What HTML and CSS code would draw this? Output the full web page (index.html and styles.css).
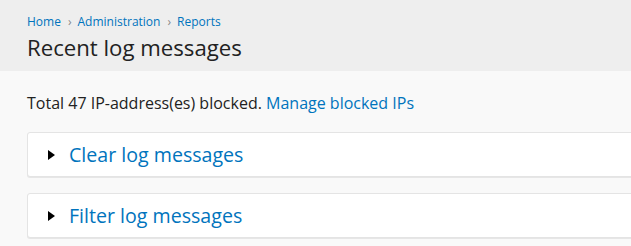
FILE: index.html
```html
<!DOCTYPE html>
<html lang="en">

<head>
	<meta charset="UTF-8">
	<meta name="viewport" content="width=device-width, initial-scale=1.0">
	<title>Recent log messages</title>
	<link rel="stylesheet" href="styles.css">
</head>

<body>
	<!-- 页面头部 -->
	<div class="header">
		<ol class="breadcrumb">
			<li><a href="#">Home</a></li>
			<li><a href="#">Administration</a></li>
			<li><a href="#">Reports</a></li>
		</ol>
		<h1 class="page-title">Recent log messages</h1>
	</div>

	<!-- 内容 -->
	<div class="content">
		<p class="blocked">Total 47 IP-address(es) blocked. <a href="#">Manage blocked IPs</a></p>

		<details class="panel">
			<summary>Clear log messages</summary>
		</details>

		<details class="panel">
			<summary>Filter log messages</summary>
		</details>
	</div>
</body>

</html>
```

FILE: styles.css
```css
* {
	margin: 0;
	padding: 0;
	box-sizing: border-box;
}

body {
	background: #f9f9f9;
	font-family: "Open Sans", "DejaVu Sans", sans-serif;
	color: #222;
	overflow: hidden;
}

a {
	color: #0074bd;
	text-decoration: none;
}

.header {
	height: 71px;
	padding: 14px 27px 0;
	background: #eee;
}

.breadcrumb {
	display: flex;
	font-size: 12px;
	line-height: 16px;
}

.breadcrumb li {
	list-style: none;
}

.breadcrumb li + li::before {
	content: "›";
	margin: 0 6px 0 7px;
	color: #888;
}

.page-title {
	margin-top: 3px;
	font-size: 22.2px;
	font-weight: 400;
	line-height: 30px;
	color: #222;
}

.content {
	padding: 22px 0 0 27px;
}

.blocked {
	font-size: 16px;
	line-height: 20px;
	margin-bottom: 19px;
}

.panel {
	width: 640px;
	height: 45px;
	margin-bottom: 16px;
	background: #fff;
	border: 1px solid #e4e4e4;
	border-radius: 3px;
	box-shadow: 0 1px 0 #e6e6e6;
}

.panel summary {
	display: flex;
	align-items: center;
	height: 43px;
	padding-left: 20px;
	list-style: none;
	font-size: 19.6px;
	color: #0074bd;
	cursor: pointer;
}

.panel summary::-webkit-details-marker {
	display: none;
}

/* 小三角 */
.panel summary::before {
	content: "";
	width: 0;
	height: 0;
	margin-right: 14px;
	border-style: solid;
	border-width: 5px 0 5px 7px;
	border-color: transparent transparent transparent #000;
}
```
